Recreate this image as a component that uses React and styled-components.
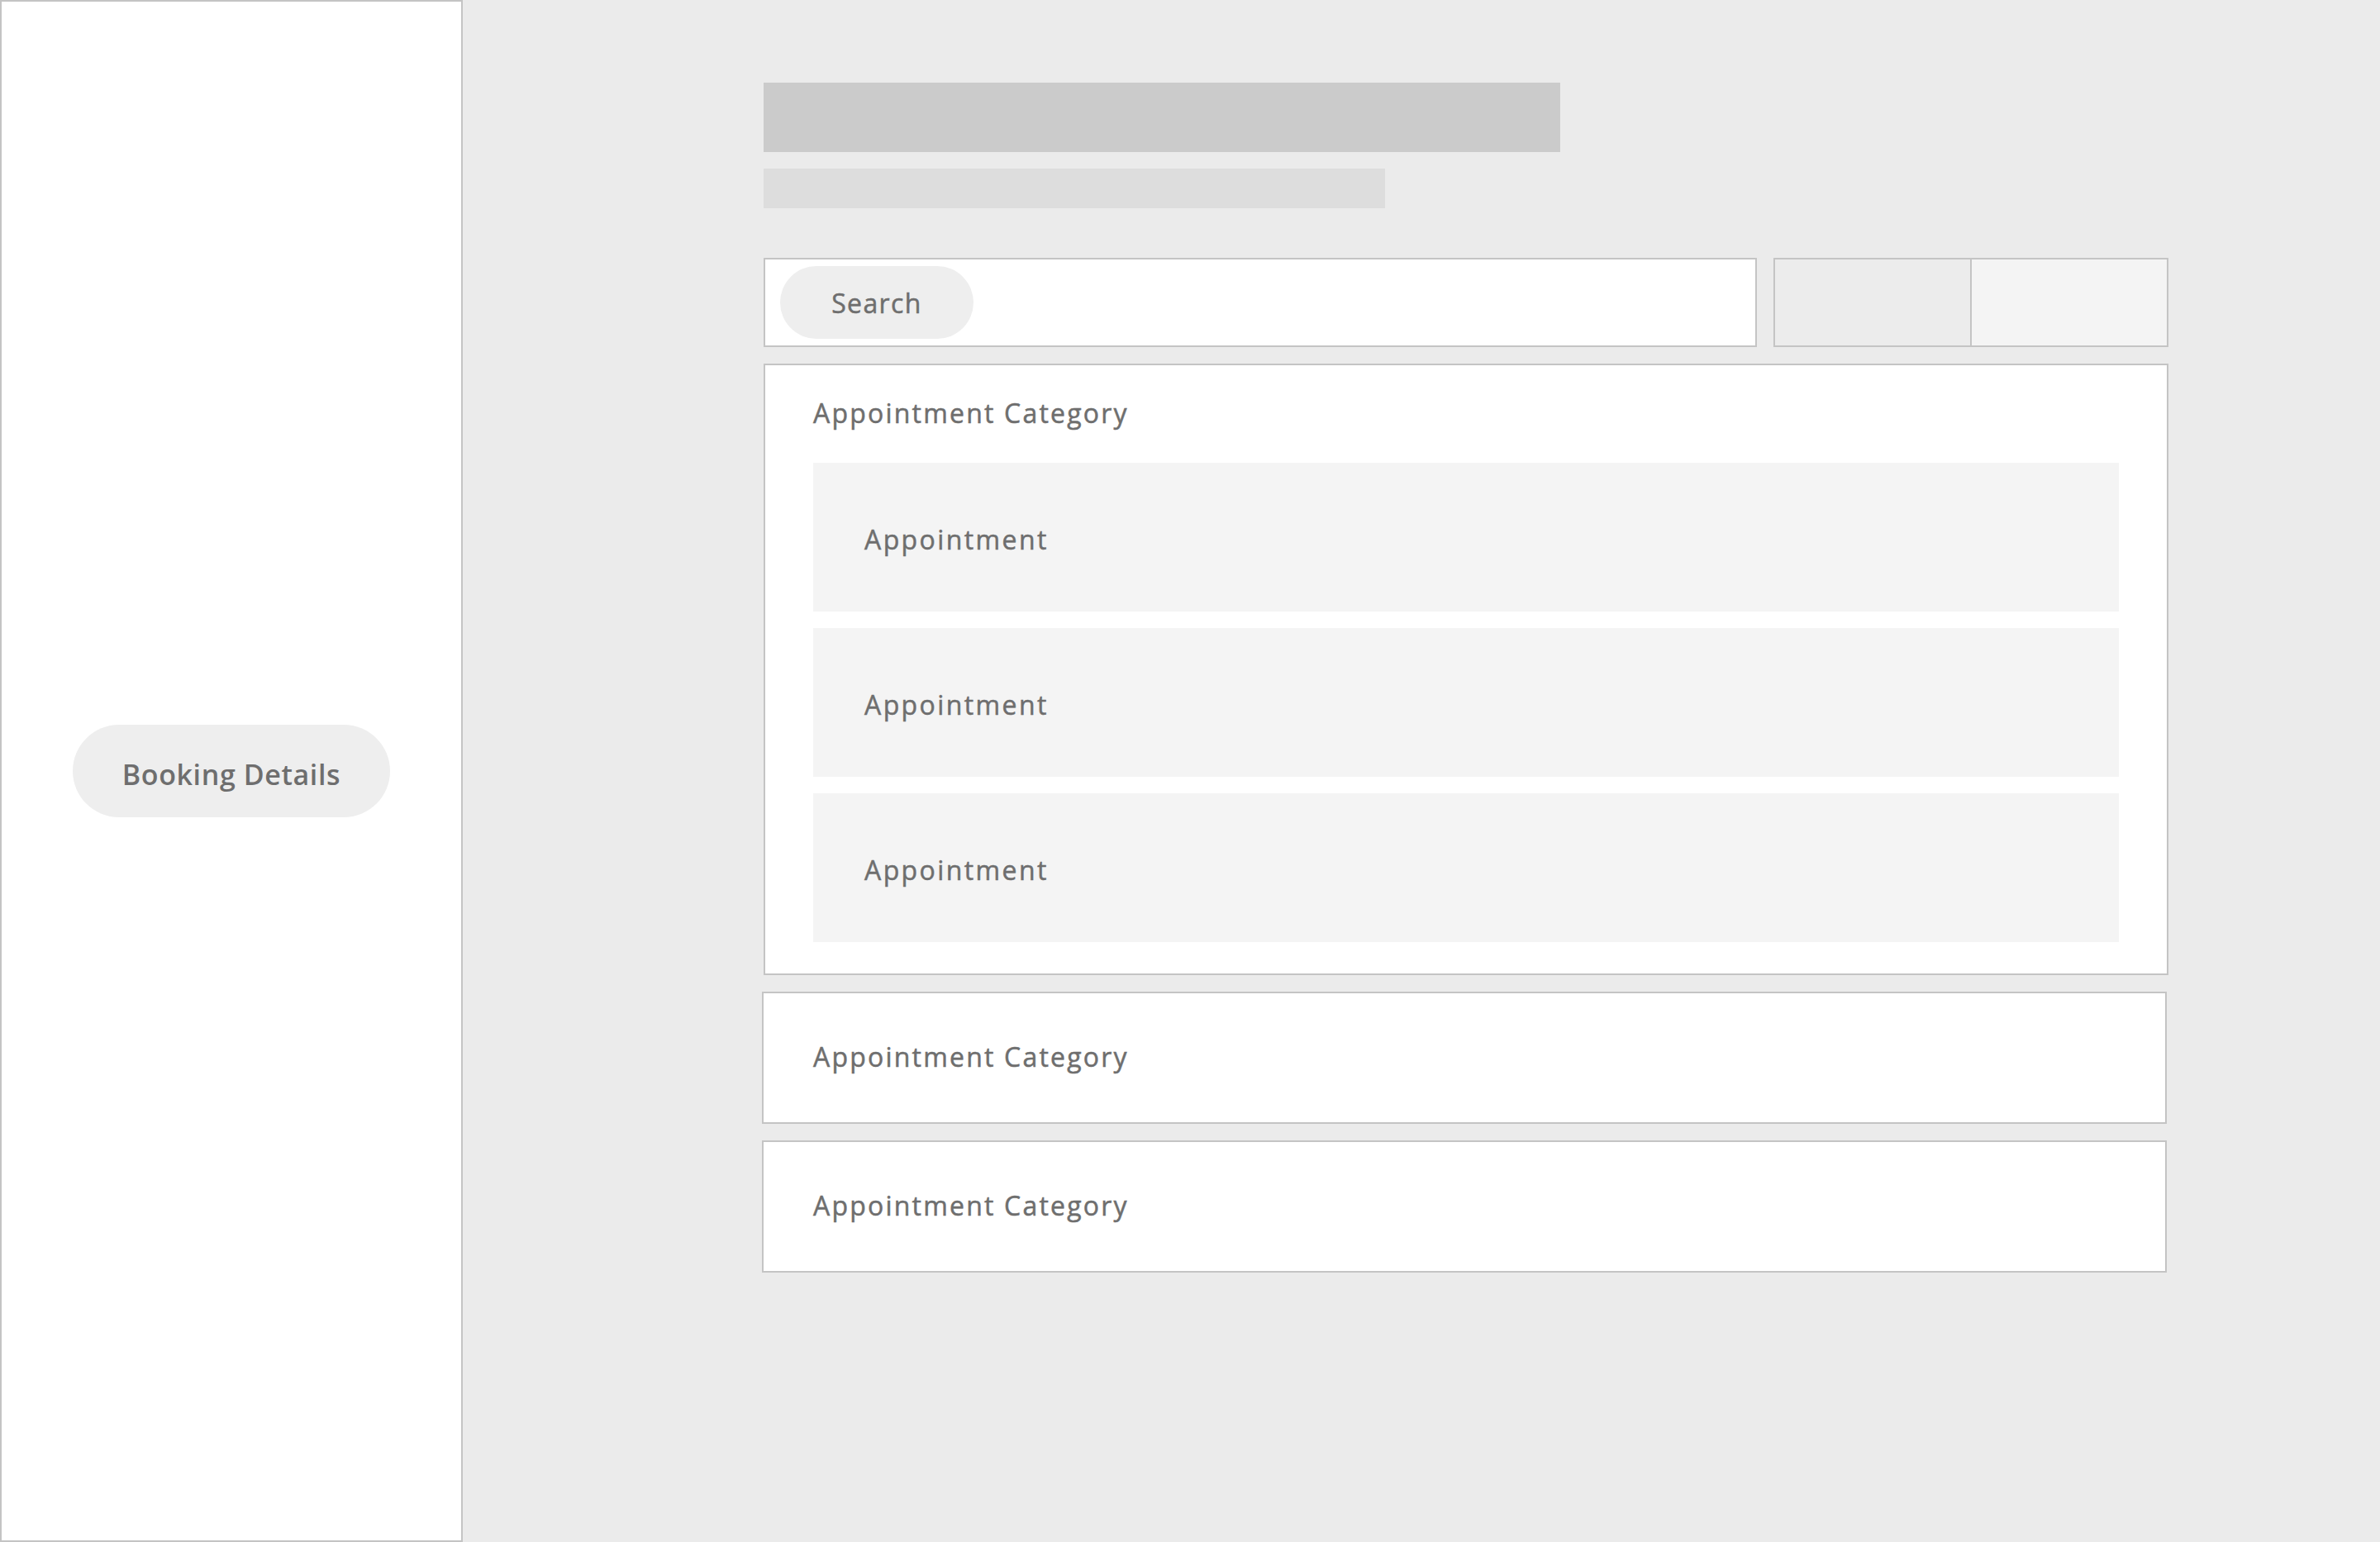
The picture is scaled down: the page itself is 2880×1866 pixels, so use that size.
import React from "react";
import styled, { createGlobalStyle } from "styled-components";

const GlobalStyle = createGlobalStyle`
  html, body {
    margin: 0;
    padding: 0;
    background: #ebebeb;
  }
  * { box-sizing: border-box; }
  #root { height: 100vh; }
`;

const Shell = styled.div`
  display: flex;
  height: 100vh;
  background: #ebebeb;
  font-family: "Open Sans", "Liberation Sans", sans-serif;
  color: #6e6e6e;
`;

const Sidebar = styled.aside`
  flex: 0 0 560px;
  height: 100%;
  background: #ffffff;
  border: 2px solid #c4c4c4;
  display: flex;
  align-items: center;
  justify-content: center;
`;

const Pill = styled.button`
  border: none;
  border-radius: 999px;
  background: #eeeeee;
  color: #6e6e6e;
  font-family: inherit;
  display: flex;
  align-items: center;
  justify-content: center;
  padding: ${(p) => p.$drop}px 0 0;
  width: ${(p) => p.$w}px;
  height: ${(p) => p.$h}px;
  font-size: ${(p) => p.$size}px;
  font-weight: ${(p) => p.$weight};
  letter-spacing: ${(p) => p.$ls}px;
  -webkit-text-stroke: ${(p) => p.$stroke}px currentColor;
`;

const Main = styled.main`
  flex: 1;
  padding: 100px 0 0 364px;
`;

const Column = styled.div`
  width: 1700px;
  display: flex;
  flex-direction: column;
`;

const Bar = styled.div`
  width: ${(p) => p.$w}px;
  height: ${(p) => p.$h}px;
  background: ${(p) => p.$bg};
  margin-bottom: ${(p) => p.$mb}px;
`;

const Toolbar = styled.div`
  display: flex;
  gap: 20px;
  height: 108px;
  margin-bottom: 20px;
`;

const SearchBox = styled.div`
  flex: 0 0 1202px;
  border: 2px solid #c4c4c4;
  background: #ffffff;
  padding: 8px 18px;
  display: flex;
  align-items: center;
`;

const Toggle = styled.div`
  flex: 1;
  display: flex;
  border: 2px solid #c4c4c4;
`;

const ToggleSeg = styled.div`
  flex: 1;
  background: ${(p) => (p.$active ? "#ececec" : "#f4f4f4")};
  & + & {
    border-left: 2px solid #c4c4c4;
  }
`;

const Stack = styled.div`
  display: flex;
  flex-direction: column;
  gap: 20px;
`;

const Card = styled.section`
  background: #ffffff;
  border: 2px solid #c4c4c4;
  padding: 0 58px ${(p) => (p.$open ? 38 : 0)}px;
  margin-left: ${(p) => (p.$shift ? -2 : 0)}px;
  margin-right: ${(p) => (p.$shift ? 2 : 0)}px;
`;

const CardHeader = styled.div`
  height: ${(p) => (p.$open ? 118 : 156)}px;
  display: flex;
  align-items: center;
  padding-left: ${(p) => (p.$shift ? 2 : 0)}px;
  padding-bottom: 4px;
  font-size: 32px;
  font-weight: 500;
  letter-spacing: 2.2px;
  -webkit-text-stroke: 0.5px currentColor;
`;

const Rows = styled.div`
  display: flex;
  flex-direction: column;
  gap: 20px;
`;

const Row = styled.div`
  height: 180px;
  background: #f4f4f4;
  display: flex;
  align-items: center;
  padding: 4px 0 0 62px;
  font-size: 32px;
  font-weight: 500;
  letter-spacing: 2.4px;
  -webkit-text-stroke: 0.5px currentColor;
`;

const categories = [
  { open: true, items: ["Appointment", "Appointment", "Appointment"] },
  { open: false, shift: true, items: [] },
  { open: false, shift: true, items: [] },
];

export default function App() {
  return (
    <>
      <GlobalStyle />
      <Shell>
        <Sidebar>
          <Pill $w={384} $h={112} $size={34} $weight={600} $ls={0.6} $drop={8} $stroke={0}>
            Booking Details
          </Pill>
        </Sidebar>
        <Main>
          <Column>
            <Bar $w={964} $h={84} $bg="#cbcbcb" $mb={20} />
            <Bar $w={752} $h={48} $bg="#dddddd" $mb={60} />
            <Toolbar>
              <SearchBox>
                <Pill $w={234} $h={88} $size={32} $weight={500} $ls={1.4} $drop={0} $stroke={0.5}>
                  Search
                </Pill>
              </SearchBox>
              <Toggle>
                <ToggleSeg $active />
                <ToggleSeg />
              </Toggle>
            </Toolbar>
            <Stack>
              {categories.map((c, i) => (
                <Card key={i} $open={c.open} $shift={c.shift}>
                  <CardHeader $open={c.open} $shift={c.shift}>
                    Appointment Category
                  </CardHeader>
                  {c.open && (
                    <Rows>
                      {c.items.map((t, j) => (
                        <Row key={j}>{t}</Row>
                      ))}
                    </Rows>
                  )}
                </Card>
              ))}
            </Stack>
          </Column>
        </Main>
      </Shell>
    </>
  );
}
